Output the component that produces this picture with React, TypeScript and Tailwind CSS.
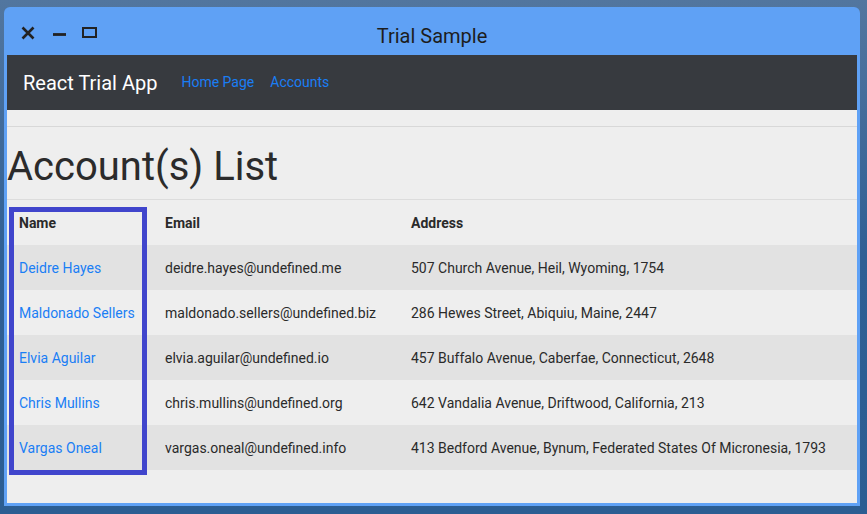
import React from "react";

type Account = {
  name: string;
  email: string;
  address: string;
};

const accounts: Account[] = [
  {
    name: "Deidre Hayes",
    email: "deidre.hayes@undefined.me",
    address: "507 Church Avenue, Heil, Wyoming, 1754",
  },
  {
    name: "Maldonado Sellers",
    email: "maldonado.sellers@undefined.biz",
    address: "286 Hewes Street, Abiquiu, Maine, 2447",
  },
  {
    name: "Elvia Aguilar",
    email: "elvia.aguilar@undefined.io",
    address: "457 Buffalo Avenue, Caberfae, Connecticut, 2648",
  },
  {
    name: "Chris Mullins",
    email: "chris.mullins@undefined.org",
    address: "642 Vandalia Avenue, Driftwood, California, 213",
  },
  {
    name: "Vargas Oneal",
    email: "vargas.oneal@undefined.info",
    address:
      "413 Bedford Avenue, Bynum, Federated States Of Micronesia, 1793",
  },
];

const TitleBar = () => (
  <div className="relative h-[48px] flex items-center">
    <div className="flex items-center pl-[12px] pt-[6px] gap-[10px]">
      <svg width="20" height="20" viewBox="0 0 20 20" className="text-[#222]">
        <path
          d="M3.5 3.5 L14.5 14.5 M14.5 3.5 L3.5 14.5"
          stroke="currentColor"
          strokeWidth="2.6"
          fill="none"
        />
      </svg>
      <svg width="20" height="20" viewBox="0 0 20 20" className="text-[#222]">
        <path d="M4 10.5 H17" stroke="currentColor" strokeWidth="2.8" fill="none" />
      </svg>
      <svg width="20" height="20" viewBox="0 0 20 20" className="text-[#222]">
        <rect
          x="4"
          y="4"
          width="13"
          height="9"
          stroke="currentColor"
          strokeWidth="2"
          fill="none"
        />
      </svg>
    </div>
    <div className="absolute inset-0 flex items-center justify-center text-[20px] text-[#1d1d1d] pt-[10px]">
      Trial Sample
    </div>
  </div>
);

const NavBar = () => (
  <nav className="h-[55px] bg-[#373a3f] flex items-center px-4">
    <span className="text-white text-[20px] leading-[30px] mr-4">
      React Trial App
    </span>
    <a className="text-[#1a7ef5] text-[14px] px-2">Home Page</a>
    <a className="text-[#1a7ef5] text-[14px] px-2">Accounts</a>
  </nav>
);

const AccountsTable = () => (
  <table className="w-full border-collapse text-[14px] text-[#2a2a2a]">
    <thead>
      <tr className="border-t border-[#dcdcdc]">
        <th className="w-[146px] text-left font-bold px-3 pt-[2px] h-[45px]">Name</th>
        <th className="w-[246px] text-left font-bold px-3 pt-[2px] h-[45px]">Email</th>
        <th className="text-left font-bold px-3 pt-[2px] h-[45px]">Address</th>
      </tr>
    </thead>
    <tbody>
      {accounts.map((acc, i) => (
        <tr key={acc.email} className={i % 2 === 0 ? "bg-[#e2e2e2]" : ""}>
          <td className="px-3 pt-[2px] h-[45px]">
            <a className="text-[#1a7ef5]">{acc.name}</a>
          </td>
          <td className="px-3 pt-[2px] h-[45px]">{acc.email}</td>
          <td className="px-3 pt-[2px] h-[45px] whitespace-nowrap">{acc.address}</td>
        </tr>
      ))}
    </tbody>
  </table>
);

export default function App() {
  return (
    <div
      className="w-[867px] h-[514px] overflow-hidden bg-gradient-to-b from-[#52769f] via-[#2f5f94] to-[#2b5d92] pt-[7px] pl-[4px]"
      style={{ fontFamily: "Roboto, 'Liberation Sans', sans-serif" }}
    >
      <div className="w-[856px] bg-[#5fa1f5] rounded-t-[6px] px-[3px] pb-[3px]">
        <TitleBar />
        <NavBar />
        <div className="relative bg-[#eeeeee] h-[393px] pt-4">
          <hr className="border-t border-[#d8d8d8]" />
          <h1 className="text-[40px] leading-[48px] text-[#2b2b2b] mt-4 mb-2">
            Account(s) List
          </h1>
          <AccountsTable />
          <div className="absolute left-[2px] top-[97px] w-[138px] h-[268px] border-[5px] border-[#4045cc]" />
        </div>
      </div>
    </div>
  );
}
